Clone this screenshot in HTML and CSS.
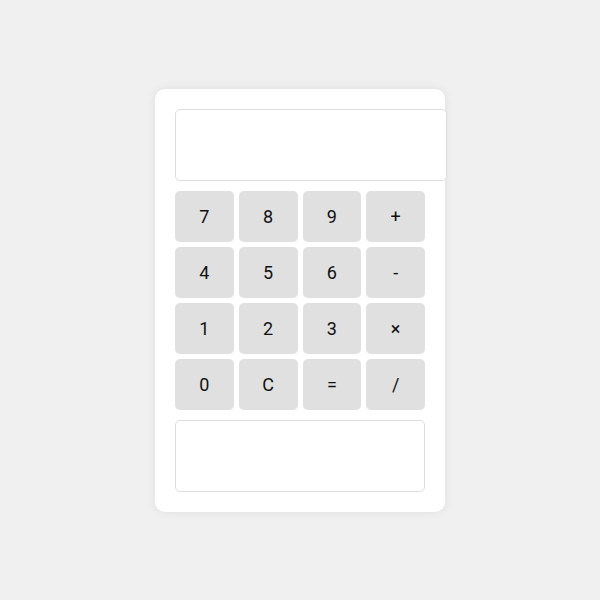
FILE: index.html
```html
<!DOCTYPE html>
<html lang="en">
<head>
  <meta charset="UTF-8">
  <meta name="viewport" content="width=device-width, initial-scale=1.0">
  <title>Calculator</title>
  <link rel="stylesheet" href="styles.css">
</head>
<body>
  <div class="calculator">
    <input id="display" class="display" type="text" readonly>

    <div class="keys">
      <button onclick="press('7')">7</button>
      <button onclick="press('8')">8</button>
      <button onclick="press('9')">9</button>
      <button onclick="press('+')">+</button>
      <button onclick="press('4')">4</button>
      <button onclick="press('5')">5</button>
      <button onclick="press('6')">6</button>
      <button onclick="press('-')">-</button>
      <button onclick="press('1')">1</button>
      <button onclick="press('2')">2</button>
      <button onclick="press('3')">3</button>
      <button onclick="press('*')">×</button>
      <button onclick="press('0')">0</button>
      <button onclick="clearAll()">C</button>
      <button onclick="calculate()">=</button>
      <button onclick="press('/')">/</button>
    </div>

    <div id="history" class="history"></div>
  </div>

  <script>
    const display = document.getElementById("display");
    const history = document.getElementById("history");

    function press(value) {
      display.value += value;
    }

    function clearAll() {
      display.value = "";
    }

    function calculate() {
      const expr = display.value;
      if (!expr) return;
      try {
        const result = Function("return (" + expr + ")")();
        history.textContent = expr + " = " + result;
        display.value = result;
      } catch (e) {
        display.value = "Error";
      }
    }
  </script>
</body>
</html>
```

FILE: styles.css
```css
body {
  margin: 0;
  background: #f0f0f0;
  font-family: Roboto, "Liberation Sans", sans-serif;
  display: flex;
  justify-content: center;
  align-items: center;
  height: 600px;
}
.calculator {
  background: #fff;
  width: 250px;
  padding: 20px;
  border-radius: 10px;
  box-shadow: 0 0 10px rgba(0, 0, 0, 0.08);
}
.display {
  width: 100%;
  height: 50px;
  padding: 10px;
  font-size: 24px;
  font-family: inherit;
  text-align: right;
  border: 1px solid #ddd;
  border-radius: 5px;
  margin: 0 0 10px;
  display: block;
}
.keys {
  display: grid;
  grid-template-columns: repeat(4, 1fr);
  gap: 5px;
}
.keys button {
  padding: 15px;
  font-size: 18px;
  font-family: inherit;
  color: #111;
  background: #e0e0e0;
  border: none;
  border-radius: 5px;
  cursor: pointer;
}
.keys button:hover {
  background: #d0d0d0;
}
.history {
  margin-top: 10px;
  height: 72px;
  box-sizing: border-box;
  padding: 10px;
  border: 1px solid #ddd;
  border-radius: 5px;
  font-size: 14px;
  color: #555;
}
```
